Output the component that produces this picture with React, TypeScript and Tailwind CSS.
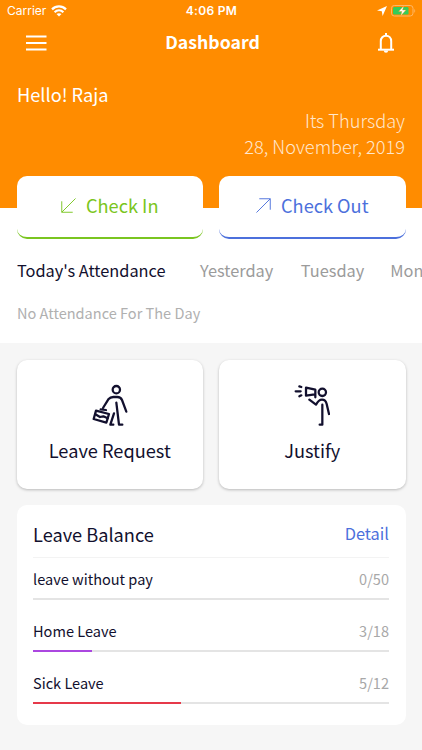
import React from 'react';

// --- DUMMY DATA ---
const DAYS = ["Today's Attendance", 'Yesterday', 'Tuesday', 'Mon'];
const DAY_GAPS = ['', 'ml-[34.500px]', 'ml-[27.500px]', 'ml-[26px]'];

const LEAVES = [
  { id: 1, name: 'leave without pay', used: 0, total: 50, color: 'bg-gray-400' },
  { id: 2, name: 'Home Leave', used: 3, total: 18, color: 'bg-[#ab47e0]' },
  { id: 3, name: 'Sick Leave', used: 5, total: 12, color: 'bg-[#e6394a]' },
];

function StatusBar() {
  return (
    <div className="h-[22px] grid grid-cols-3 items-center pl-[7px] pr-[6px] font-['Inter',sans-serif] text-[12px] leading-none">
      <div className="flex items-center gap-[5px]">
        <span>Carrier</span>
        <svg width="16" height="12" viewBox="0 0 16 12" fill="none" stroke="currentColor" strokeWidth="2.200">
          <path d="M1 4.4C5 .4 11 .4 15 4.4" />
          <path d="M3.6 7.2c2.6-2.5 6.200-2.5 8.800 0" />
          <path d="M8 11.600 5.500 9.100c1.400-1.200 3.600-1.200 5 0z" fill="currentColor" stroke="none" />
        </svg>
      </div>
      <span className="text-center font-semibold tracking-[0.3px]">4:06 PM</span>
      <div className="flex items-center justify-end gap-[4px]">
        <svg width="10" height="10" viewBox="0 0 10 10" fill="currentColor">
          <path d="M10 0 5.600 10 4.800 5.200 0 4.500z" />
        </svg>
        <svg width="25" height="12" viewBox="0 0 25 12" fill="none">
          <rect x=".5" y=".5" width="21.500" height="10.500" rx="2.800" stroke="#ffb866" />
          <rect x="2" y="2" width="15.500" height="7.500" rx="1.300" fill="#35cc5a" />
          <path d="M23.300 4v3.700c1.200-.4 1.200-3.200 0-3.700z" fill="#ffb866" />
          <path d="M12.800.8 7.600 6.500h3.300L9.600 10.900 15 5.100h-3.400z" fill="#fff" stroke="#ff8c00" strokeWidth=".4" />
        </svg>
      </div>
    </div>
  );
}

function LeaveIcon() {
  return (
    <svg width="36" height="43" viewBox="0 0 108 129" fill="none" stroke="currentColor" strokeWidth="6.800" strokeLinecap="round" strokeLinejoin="round">
      <circle cx="73" cy="17" r="11" />
      <path d="M33 72 49 46Q55 39 64 39H76Q86 39 90 48L103 83" />
      <path d="M73 56 81 122H91" />
      <path d="M66 88 55 122H64" />
      <path d="M12 80 51 90 43 116 5 105Z" />
      <path d="M26 76 42 78M10 91 24 99 34 97 47 103" />
    </svg>
  );
}

function JustifyIcon() {
  return (
    <svg width="36" height="43" viewBox="0 0 108 129" fill="none" stroke="currentColor" strokeWidth="6.800" strokeLinecap="round" strokeLinejoin="round">
      <circle cx="85" cy="25" r="11" />
      <path d="M64 40V17L36 11V35L62 31" />
      <path d="M5 22H20M16 7 22 9M16 37 22 34" />
      <path d="M46 47 66 62Q74 47 84 47 95 47 98 60L105 90" />
      <path d="M85 62V122H77" />
    </svg>
  );
}

function CheckButton({ label, icon, className }: { label: string, icon: React.ReactNode, className: string }) {
  return (
    <button className={`flex-1 h-[63px] rounded-[10px] border-b-2 bg-white flex items-center justify-center gap-[10px] pb-[2px] text-[18.200px] ${className}`}>
      {icon}
      <span>{label}</span>
    </button>
  );
}

function ActionCard({ label, icon }: { label: string, icon: React.ReactNode }) {
  return (
    <button className="flex-1 h-[129px] rounded-[10px] bg-white shadow-[0_1px_3px_rgba(0,0,0,0.25)] flex flex-col items-center pt-6">
      {icon}
      <span className="mt-[8px] text-[18.200px] leading-[30px]">{label}</span>
    </button>
  );
}

export default function App() {
  return (
    <div className="w-full h-[750px] overflow-hidden flex flex-col bg-[#f6f6f6] font-['Noto_Sans_CJK_SC',sans-serif] text-[#12102e]">
      <header className="h-[208px] shrink-0 bg-[#ff8c00] text-white">
        <StatusBar />
        <div className="h-[42px] flex items-center justify-between pl-[26px] pr-[28px]">
          <svg width="21" height="16" viewBox="0 0 21 16" stroke="currentColor" strokeWidth="2">
            <path d="M0 1.500h20.500M0 8h20.500M0 14.500h20.500" />
          </svg>
          <h1 className="pb-[3px] text-[17.700px] leading-none font-bold">Dashboard</h1>
          <svg width="16" height="20" viewBox="0 0 16 20" fill="none" stroke="currentColor" strokeWidth="2">
            <path d="M0 16.700H16" />
            <path d="M2.800 16.700V8.200C2.800 5 5 2.800 8 2.800s5.200 2.200 5.200 5.400v8.500" />
            <path d="M8 0v3" />
            <path d="M5.800 17.500a2.200 2.200 0 0 0 4.400 0z" fill="currentColor" stroke="none" />
          </svg>
        </div>
        <div className="px-[17px] pt-[17px]">
          <p className="text-[18.200px] leading-[26px]">Hello! Raja</p>
          <p className="text-right text-[18.200px] leading-[26px] font-light opacity-80">Its Thursday<br />28, November, 2019</p>
        </div>
      </header>

      {/* Attendance */}
      <section className="h-[135px] shrink-0 bg-white">
        <div className="-mt-8 px-[16.500px] flex gap-4">
          <CheckButton
            label="Check In"
            className="border-[#7ac520] text-[#7ac520]"
            icon={<svg width="15" height="15" viewBox="0 0 16 16" fill="none" stroke="currentColor"><path d="M15.500.5.800 15.200M.800 3.500V15.200H12.500" /></svg>}
          />
          <CheckButton
            label="Check Out"
            className="border-[#4c70dc] text-[#4c70dc]"
            icon={<svg width="15" height="15" viewBox="0 0 16 16" fill="none" stroke="currentColor"><path d="M.5 15.500 15.200.8M3.500.8H15.200V12.500" /></svg>}
          />
        </div>
        <div className="mt-[18px] pl-[17px] flex whitespace-nowrap overflow-hidden text-[16.350px] leading-[26px]">
          {DAYS.map((day, i) => (
            <span key={day} className={`shrink-0 ${DAY_GAPS[i]} ${i === 0 ? '' : 'text-[#9b9b9b]'}`}>{day}</span>
          ))}
        </div>
        <p className="mt-[19px] pl-[17px] text-[14.550px] leading-[22px] text-[#b0b0b0]">No Attendance For The Day</p>
      </section>

      {/* Quick actions */}
      <div className="mt-[17px] px-[16.500px] flex gap-4">
        <ActionCard label="Leave Request" icon={<LeaveIcon />} />
        <ActionCard label="Justify" icon={<JustifyIcon />} />
      </div>

      {/* Leave balance */}
      <section className="mt-4 mx-[16.500px] h-[220px] shrink-0 rounded-[10px] bg-white px-[16.500px]">
        <div className="h-[53px] flex items-center justify-between pt-[5px] border-b border-[#f3f3f3]">
          <h2 className="text-[18.200px] leading-[30px]">Leave Balance</h2>
          <a className="pb-[2px] text-[16.400px] leading-[28px] text-[#4c70dc]">Detail</a>
        </div>
        {LEAVES.map((leave) => (
          <div key={leave.id} className="h-[52px] pt-[9px]">
            <div className="flex justify-between text-[14.550px] leading-[24px]">
              <span>{leave.name}</span>
              <span className="text-[#a8a8a8]">{leave.used}/{leave.total}</span>
            </div>
            <div className="mt-[7px] h-[2px] bg-[#e4e4e4]">
              <div className={`h-full ${leave.color}`} style={{ width: `${(leave.used / leave.total) * 100}%` }} />
            </div>
          </div>
        ))}
      </section>
    </div>
  );
}
